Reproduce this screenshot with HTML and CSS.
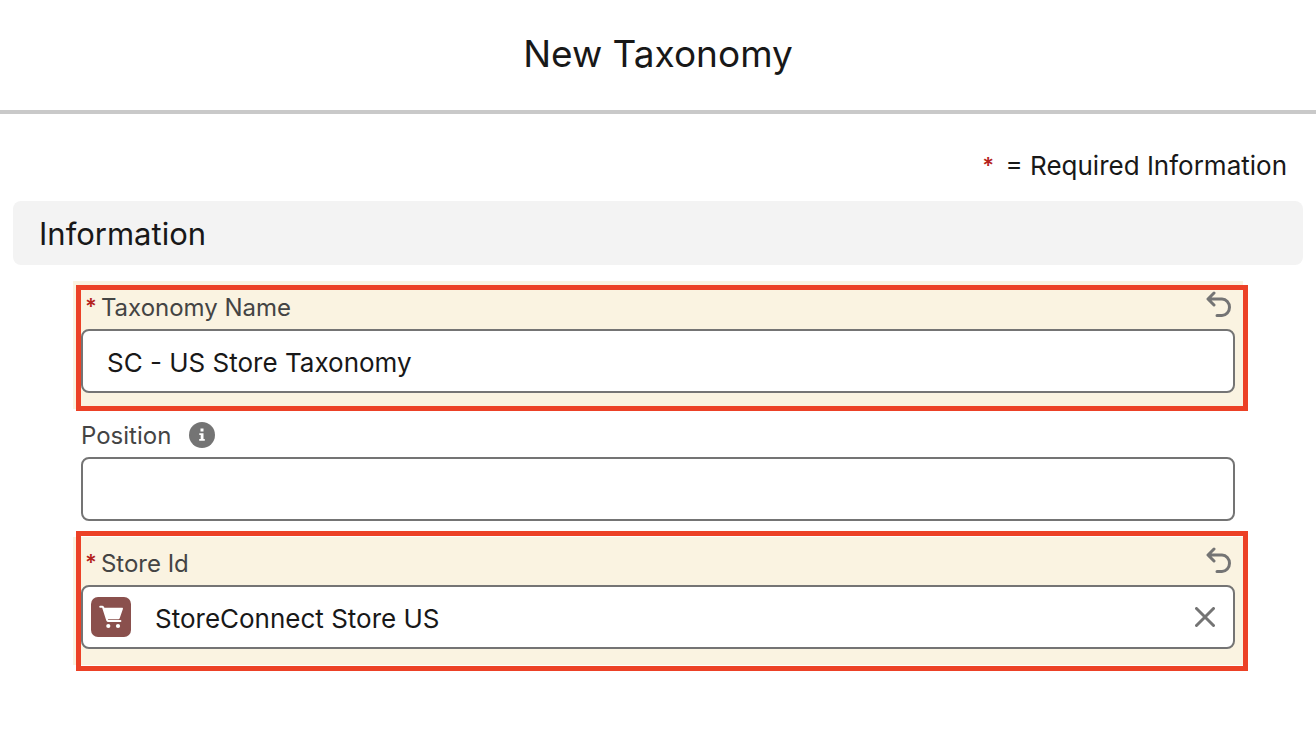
FILE: index.html
```html
<!DOCTYPE html>
<html lang="en">
<head>
    <meta charset="UTF-8">
    <meta name="viewport" content="width=device-width, initial-scale=1.0">
    <title>New Taxonomy</title>
    <link rel="stylesheet" href="styles.css">
</head>
<body>
    <header class="modal-header">
        <h1>New Taxonomy</h1>
    </header>

    <form class="modal-body">
        <p class="legend"><span class="required">*</span> = Required Information</p>
        <h2 class="section-title">Information</h2>

        <div class="fields">
            <div class="field edited">
                <div class="field-label">
                    <label for="taxonomyName"><span class="required">*</span>Taxonomy Name</label>
                    <button type="button" class="icon-button undo" aria-label="Undo Taxonomy Name">
                        <svg width="26" height="28" viewBox="0 0 26 28"><path d="M8 3L2 9l6 6M2.500 9H16a7.500 8.200 0 0 1 0 16.400h-5"/></svg>
                    </button>
                </div>
                <div class="control">
                    <input type="text" id="taxonomyName" value="SC - US Store Taxonomy">
                </div>
            </div>

            <div class="field">
                <div class="field-label">
                    <label for="position">Position</label>
                    <button type="button" class="icon-button info" aria-label="Help Position">
                        <svg width="26" height="26" viewBox="0 0 26 26">
                            <circle cx="13" cy="13" r="13"/>
                            <path class="mark" d="M11.500 6.500h3v3h-3zM10.300 11.200h4.200v5.800h1.300v1.700h-5.600V17h1.500v-4.100h-1.400z"/>
                        </svg>
                    </button>
                </div>
                <div class="control">
                    <input type="text" id="position">
                </div>
            </div>

            <div class="field edited lookup">
                <div class="field-label">
                    <label for="storeId"><span class="required">*</span>Store Id</label>
                    <button type="button" class="icon-button undo" aria-label="Undo Store Id">
                        <svg width="26" height="28" viewBox="0 0 26 28"><path d="M8 3L2 9l6 6M2.500 9H16a7.500 8.200 0 0 1 0 16.400h-5"/></svg>
                    </button>
                </div>
                <div class="control">
                    <svg class="store-icon" width="40" height="40" viewBox="0 0 40 40">
                        <rect width="40" height="40" rx="7"/>
                        <path class="basket" d="M12.200 10.800H31c.8 0 1.100.5.900 1.200l-3.200 9.300c-.2.600-.6.900-1.200.9H15.800z"/>
                        <path class="frame" d="M9.200 9.800h1.900c.6 0 .9.300 1.100.8l4 12.500c.2.600.6.900 1.200.9h12"/>
                        <circle cx="17.300" cy="29" r="2.100"/>
                        <circle cx="27" cy="29" r="2.100"/>
                    </svg>
                    <input type="text" id="storeId" value="StoreConnect Store US">
                    <button type="button" class="icon-button clear" aria-label="Clear selection">
                        <svg width="20" height="20" viewBox="0 0 20 20"><path d="M1.500 1.500l17 17M18.500 1.500l-17 17"/></svg>
                    </button>
                </div>
            </div>
        </div>
    </form>
</body>
</html>
```

FILE: styles.css
```css
* {
    box-sizing: border-box;
}
body {
    margin: 0;
    font-family: Inter, "Liberation Sans", sans-serif;
    background-color: #ffffff;
    color: #181818;
}
h1, h2, p {
    margin: 0;
    font-weight: 400;
}
.modal-header {
    padding: 30px 24px 32px;
    border-bottom: 4px solid #c9c9c9;
    text-align: center;
}
.modal-header h1 {
    font-size: 37px;
    line-height: 48px;
}
.modal-body {
    padding: 32px 13px;
}
.legend {
    padding: 0 16px 15px;
    font-size: 26px;
    line-height: 40px;
    text-align: right;
}
.required {
    margin-right: 4px;
    color: #b4221c;
    font-size: 22px;
    font-weight: 600;
    line-height: 1;
    vertical-align: 2px;
}
.section-title {
    padding: 1px 26px 0;
    border-radius: 8px;
    background-color: #f3f3f3;
    font-size: 31px;
    line-height: 63px;
}
.fields {
    padding: 16px 60px;
}
.field {
    position: relative;
    padding: 0 8px 16px;
}
.field.edited {
    background-color: #faf3e1;
}
/* red frame drawn around the edited fields */
.field.edited::after {
    content: "";
    position: absolute;
    top: 4px;
    right: -5px;
    bottom: -2px;
    left: 3px;
    border: 5px solid #ec4126;
    pointer-events: none;
}
.field.lookup::after {
    top: -6px;
    bottom: -6px;
}
.field-label {
    display: flex;
    align-items: center;
    height: 48px;
    padding-top: 4px;
    color: #444444;
    font-size: 24px;
}
.edited .field-label {
    padding-left: 4px;
}
.icon-button {
    display: flex;
    padding: 0;
    border: none;
    background: none;
    cursor: pointer;
}
.icon-button path {
    fill: none;
    stroke: #747474;
    stroke-width: 3;
    stroke-linecap: round;
    stroke-linejoin: round;
}
.undo {
    margin: 0 3px 6px auto;
}
.info {
    margin-left: 18px;
}
.info circle {
    fill: #747474;
}
.info .mark {
    fill: #ffffff;
    stroke: none;
}
.control {
    display: flex;
    align-items: center;
    height: 64px;
    border: 2px solid #747474;
    border-radius: 8px;
    background-color: #ffffff;
}
.control input {
    flex: 1;
    min-width: 0;
    padding: 2px 24px 0;
    border: none;
    outline: none;
    background: none;
    color: #181818;
    font-family: inherit;
    font-size: 26px;
}
.store-icon {
    flex: none;
    margin-left: 8px;
    fill: #ffffff;
}
.store-icon rect {
    fill: #8a504d;
}
.store-icon .frame {
    fill: none;
    stroke: #ffffff;
    stroke-width: 2;
    stroke-linecap: round;
}
.clear {
    margin-right: 18px;
}
```
